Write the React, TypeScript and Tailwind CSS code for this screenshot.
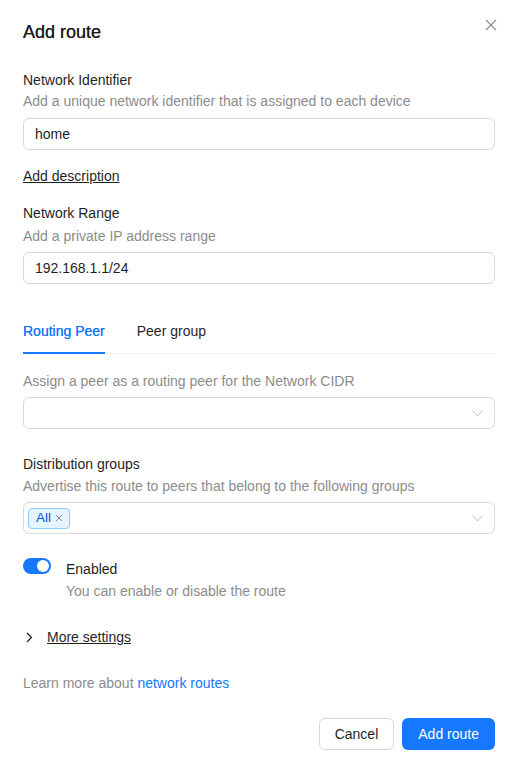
import React from "react";

const Chevron = () => (
  <svg width="11" height="7" viewBox="0 0 11 7" fill="none" className="text-[#bfbfbf]">
    <path d="M0.5 0.5 L5.5 6 L10.5 0.5" stroke="currentColor" strokeWidth="1" />
  </svg>
);

export default function App() {
  return (
    <div className="w-[518px] h-[770px] bg-white text-[14px] leading-[22px] text-[#1f1f1f]" style={{ fontFamily: '"Liberation Sans", Arial, sans-serif' }}>
      <div className="px-[23px] pt-[18px]">
        <div className="flex items-start justify-between">
          <div className="text-[18px] leading-[28px] text-[#1f1f1f] [text-shadow:0_0_0.3px_currentcolor]">Add route</div>
          <svg width="12" height="12" viewBox="0 0 12 12" className="mt-[1px] mr-[-2px] text-[#8c8c8c]">
            <path d="M1 1 L11 11 M11 1 L1 11" stroke="currentColor" strokeWidth="1.2" />
          </svg>
        </div>

        <div className="mt-[23px]">Network Identifier</div>
        <div className="text-[#8c8c8c] -mt-[1px]">Add a unique network identifier that is assigned to each device</div>
        <div className="mt-[6px] h-[32px] border border-[#d9d9d9] rounded-[6px] px-[11px] flex items-center">home</div>

        <div className="mt-[15px]"><span className="underline">Add description</span></div>

        <div className="mt-[15px]">Network Range</div>
        <div className="text-[#8c8c8c] mt-[1px]">Add a private IP address range</div>
        <div className="mt-[5px] h-[32px] border border-[#d9d9d9] rounded-[6px] px-[11px] flex items-center">192.168.1.1/24</div>

        <div className="mt-[24px] flex border-b border-[#f0f0f0] gap-[32px]">
          <div className="pt-[12px] pb-[10px] text-[#1677ff] border-b-2 border-[#1677ff] -mb-[1px] [text-shadow:0_0_0.3px_currentcolor]">Routing Peer</div>
          <div className="pt-[12px] pb-[10px] border-b-2 border-transparent -mb-[1px]">Peer group</div>
        </div>

        <div className="mt-[16px] text-[#8c8c8c]">Assign a peer as a routing peer for the Network CIDR</div>
        <div className="mt-[5px] h-[32px] border border-[#d9d9d9] rounded-[6px] px-[11px] flex items-center justify-end">
          <Chevron />
        </div>

        <div className="mt-[24px]">Distribution groups</div>
        <div className="text-[#8c8c8c]">Advertise this route to peers that belong to the following groups</div>
        <div className="mt-[5px] h-[32px] border border-[#d9d9d9] rounded-[6px] pl-[4px] pr-[11px] flex items-center justify-between">
          <div className="h-[21px] flex items-center gap-[4px] bg-[#e6f4ff] border border-[#91caff] rounded-[4px] pl-[7px] pr-[6px] text-[#0958d9] text-[13.5px]">
            <span>All</span>
            <svg width="8" height="8" viewBox="0 0 8 8" className="text-[#8c8c8c]">
              <path d="M1 1 L7 7 M7 1 L1 7" stroke="currentColor" strokeWidth="1" />
            </svg>
          </div>
          <Chevron />
        </div>

        <div className="mt-[24px] flex gap-[15px]">
          <div className="w-[28px] h-[16px] rounded-full bg-[#1677ff] relative shrink-0">
            <div className="absolute right-[2px] top-[2px] w-[12px] h-[12px] rounded-full bg-white" />
          </div>
          <div>
            <div>Enabled</div>
            <div className="text-[#8c8c8c]">You can enable or disable the route</div>
          </div>
        </div>

        <div className="mt-[24px] flex items-center gap-[14px] pl-[3px]">
          <svg width="7" height="11" viewBox="0 0 7 11" fill="none" className="text-[#1f1f1f]">
            <path d="M1 1 L5.5 5.5 L1 10" stroke="currentColor" strokeWidth="1.2" />
          </svg>
          <span className="underline">More settings</span>
        </div>

        <div className="mt-[24px] text-[#8c8c8c]">
          Learn more about <span className="text-[#1677ff]">network routes</span>
        </div>

        <div className="mt-[24px] flex justify-end gap-[8px]">
          <div className="h-[32px] px-[15px] border border-[#d9d9d9] rounded-[6px] flex items-center">Cancel</div>
          <div className="h-[32px] px-[16px] bg-[#1677ff] text-white rounded-[6px] flex items-center">Add route</div>
        </div>
      </div>
    </div>
  );
}
